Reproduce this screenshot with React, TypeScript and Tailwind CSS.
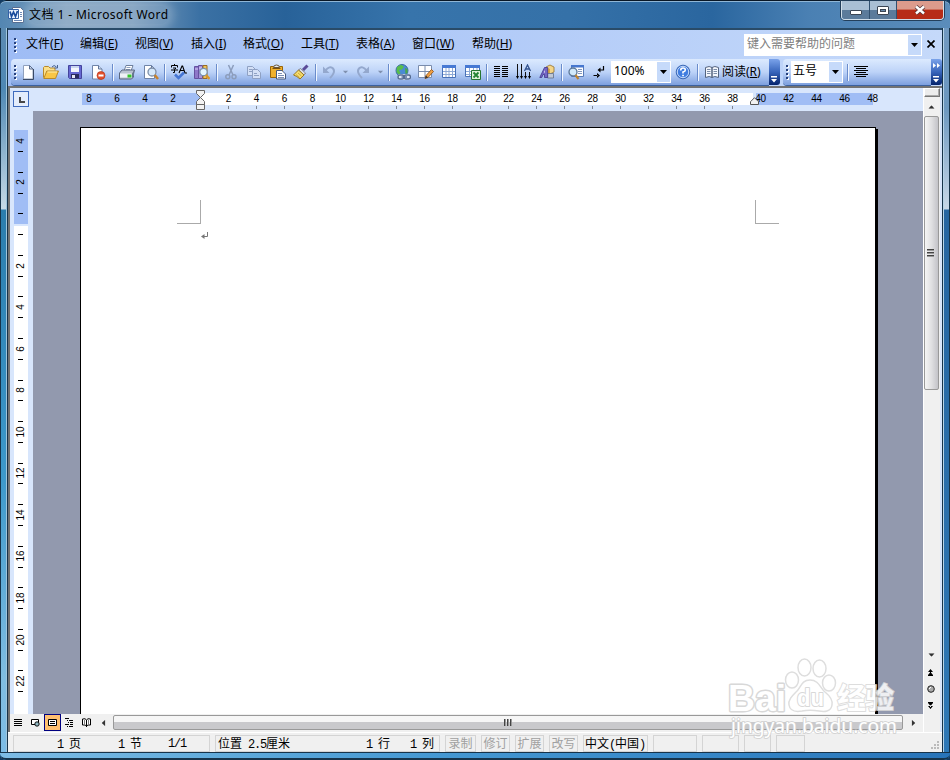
import React from 'react';

const menus = [
    { label: "文件", hotkey: "F", width: "w-[54px]" },
    { label: "编辑", hotkey: "E", width: "w-[55px]" },
    { label: "视图", hotkey: "V", width: "w-[56px]" },
    { label: "插入", hotkey: "I", width: "w-[52px]" },
    { label: "格式", hotkey: "O", width: "w-[58px]" },
    { label: "工具", hotkey: "T", width: "w-[55px]" },
    { label: "表格", hotkey: "A", width: "w-[56px]" },
    { label: "窗口", hotkey: "W", width: "w-[60px]" },
    { label: "帮助", hotkey: "H", width: "w-[54px]" },
];

const icons: Record<string, React.ReactNode> = {
    new: (
        <>
            <path d="M3.500 1.500h6l3.500 3.500v10H3.500z" fill="#fff" stroke="#8fa0bd" />
            <path d="M13.500 5v10.500H3" fill="none" stroke="#3a4a66" />
            <path d="M9.500 1.500V5H13z" fill="#cfdcf2" stroke="#5b6d8d" />
        </>
    ),
    open: (
        <>
            <path d="M.5 13.500v-10l1-1h4l1.500 1.500h5v2.500" fill="#fbe08a" stroke="#b8892a" />
            <path d="M.8 14.500l3-7.500h11.700l-3 7.500z" fill="#f9c646" stroke="#b8892a" />
            <path d="M4.500 8h9.500" stroke="#fff0b0" />
            <path d="M9 3q2-3 4.500 0M14.500 1v3h-3" fill="none" stroke="#4a6390" />
        </>
    ),
    save: (
        <>
            <path d="M1.500 1.500h13v13h-12l-1-1z" fill="#6668d2" stroke="#44449c" />
            <path d="M4 2h8v6H4z" fill="#f2f5fd" />
            <path d="M4 2h8v2H4z" fill="#c9d5f0" />
            <path d="M4 10h8v4.500H4z" fill="#292b5e" />
            <path d="M5 11h3v3H5z" fill="#e5e7f5" />
        </>
    ),
    permission: (
        <>
            <path d="M2.500 1.500h6l3.500 3.500v10H2.500z" fill="#fff" stroke="#6f84a8" />
            <path d="M8.500 1.500V5H12" fill="#cfdcf2" stroke="#5f7498" />
            <circle cx="11" cy="11.500" r="4" fill="#e2512e" stroke="#b52e12" strokeWidth=".6" />
            <path d="M8.500 10.500h5v2h-5z" fill="#fff" />
        </>
    ),
    print: (
        <>
            <path d="M5 7l2-5.500h7L12 7z" fill="#fff" stroke="#6d7f9d" />
            <path d="M7.500 3.500h4M7 5.500h4" stroke="#8ea0bd" />
            <path d="M.5 9l2.500-3h12.500l-1 4v3l-2 2H.5z" fill="#b9c2d0" stroke="#5a6780" />
            <path d="M1 9.500h12v4H1z" fill="#eef1f6" />
            <path d="M8.500 10.500h4v3h-4z" fill="#35c62b" />
            <path d="M13 9.500l2-3v5l-2 3z" fill="#66758f" />
        </>
    ),
    preview: (
        <>
            <path d="M1.500 1.500h7l3 3v10h-10z" fill="#fff" stroke="#6f84a8" />
            <path d="M8.500 1.500v3h3" fill="none" stroke="#5f7498" />
            <circle cx="9" cy="8" r="4" fill="#d6e9fb" stroke="#7b8da8" strokeWidth="1.300" />
            <path d="M11.700 11l3.300 4" stroke="#c8822c" strokeWidth="2.500" />
        </>
    ),
    spelling: (
        <>
            <path d="M3.500 0v1.500M.5 3.500v-2h6v2M2 4h3L3.500 5.500V8.500H2M0 6h7" fill="none" stroke="#000" />
            <path d="M8 9l3-7h.6L14 9M9 6.500h4M13.500 9H16" fill="none" stroke="#000" strokeWidth="1.100" />
            <path d="M4 10.500l3.500 3.500L13 8.500" fill="none" stroke="#4676d4" strokeWidth="2.600" />
        </>
    ),
    research: (
        <>
            <path d="M.5 2.500h4v12h-4z" fill="#8e78c9" stroke="#6652a0" />
            <path d="M4.500 1.500h4v13h-4z" fill="#a894dc" stroke="#6652a0" />
            <path d="M9 1.500h4v13H9z" fill="#eec35c" stroke="#9b6c22" />
            <path d="M1 5h3M5 4h3" stroke="#ddd2fa" />
            <circle cx="9.500" cy="8" r="3.700" fill="#e2f4fe" stroke="#7590af" strokeWidth="1.200" />
            <path d="M12 11l3.500 4" stroke="#d9982b" strokeWidth="2.400" />
        </>
    ),
    cut: (
        <g fill="none" stroke="#8c9dbc" strokeWidth="1.500">
            <path d="M5.500 1l4.500 10M10.500 1L6 11" />
            <circle cx="4.800" cy="12.800" r="2" />
            <circle cx="11" cy="12.800" r="2" />
        </g>
    ),
    copy: (
        <g fill="#d4e0f6" stroke="#8fa1c3">
            <path d="M1.500 2.500h5l3 3v6h-8z" />
            <path d="M3 5.500h3M3 7.500h4" />
            <path d="M6.500 5.500h5l3 3v6h-8z" />
            <path d="M8 9.500h3M8 11.500h5" />
        </g>
    ),
    paste: (
        <>
            <path d="M.5 2.500h12v11H.5z" fill="#efb02d" stroke="#97650b" />
            <path d="M3.500 3.500q0-2.500 3-2.500t3 2.500z" fill="#e8ebf2" stroke="#68563a" />
            <path d="M2.500 4.500h8" stroke="#7b5009" />
            <path d="M6.500 6.500h5.500l3.500 3.500v5h-9z" fill="#fff" stroke="#465a80" />
            <path d="M8 9.500h4M8 11.500h6M8 13.500h6" stroke="#7d90b4" />
        </>
    ),
    brush: (
        <>
            <path d="M10 6l4.500-4.500" stroke="#5a4b98" strokeWidth="3" />
            <path d="M7.500 4.500l5 4.500-1.500 2-5.500-5z" fill="#dadde6" stroke="#62606c" strokeWidth=".7" />
            <path d="M5.500 6l5.500 5-4 4Q4 12 .5 11z" fill="#f5dc6c" stroke="#9a781e" />
            <path d="M3 10.500l3.500 3M5 9l3.500 3" stroke="#c19a32" strokeWidth=".8" />
        </>
    ),
    undo: (
        <>
            <path d="M4 7q5-6 8-2.500T9 14" fill="none" stroke="#94a8cd" strokeWidth="2" />
            <path d="M2 2.500v6.500h6.500z" fill="#94a8cd" />
        </>
    ),
    redo: (
        <>
            <path d="M12 7q-5-6-8-2.500T7 14" fill="none" stroke="#94a8cd" strokeWidth="2" />
            <path d="M14 2.500v6.500H7.500z" fill="#94a8cd" />
        </>
    ),
    link: (
        <>
            <circle cx="7" cy="6.500" r="6" fill="#4a8ad4" stroke="#3b6a9c" />
            <path d="M2 3l4-2.300 3 1.800-2 3-3 .5 1.500 3L4 11 1.500 8z" fill="#58bd4c" />
            <path d="M10 4l2.500 1v4l-2 1z" fill="#49a94a" />
            <rect x="2.500" y="10" width="13.500" height="6" rx="3" fill="#dfe8f8" />
            <g fill="none" stroke="#546b92" strokeWidth="1.400">
                <rect x="3" y="11" width="6" height="4" rx="2" />
                <rect x="9" y="11" width="6.500" height="4" rx="2" />
                <path d="M6.500 13H12" />
            </g>
        </>
    ),
    borders: (
        <>
            <path d="M.5 1.500h13v12H.5z" fill="#fff" stroke="#7a8cac" />
            <path d="M7 2v11M1 7.500h12" stroke="#7a8cac" />
            <path d="M7 14.500l1-3 5.500-6 2 2-5.500 6z" fill="#f0a044" stroke="#884b15" strokeWidth=".8" />
            <path d="M7 14.500l1-3 2 2z" fill="#333" />
        </>
    ),
    table: (
        <>
            <path d="M1.500 1.500h13v12h-13z" fill="#fff" stroke="#4770b7" />
            <path d="M1 1h14v3H1z" fill="#4679d4" />
            <path d="M2 7.500h12M2 10.500h12M5 4v9M8 4v9M11.500 4v9" stroke="#8ea9d6" />
        </>
    ),
    excel: (
        <>
            <path d="M.5 1.500h14v11H.5z" fill="#fff" stroke="#4770b7" />
            <path d="M0 1h15v3H0z" fill="#4679d4" />
            <path d="M1 7.500h13M1 10.500h8M4.500 4v8M8.500 4v8M12 4v3" stroke="#8ea9d6" />
            <path d="M6.500 6.500h9v9h-9z" fill="#dff1da" stroke="#267531" />
            <path d="M8.500 8.500l5 5M13.500 8.500l-5 5" stroke="#238333" strokeWidth="1.800" />
        </>
    ),
    columns: <path d="M1 2.500h6M1 4.500h6M1 6.500h6M1 8.500h6M1 10.500h6M1 12.500h6M9 2.500h6M9 4.500h6M9 6.500h6M9 8.500h6M9 10.500h6M9 12.500h6" stroke="#000" />,
    direction: (
        <>
            <path d="M1.500 0v13M5.500 0v13M9.500 8v5M13.500 8v5" stroke="#111" />
            <path d="M0 12h3l-1.500 3zM4 12h3l-1.500 3zM8 12h3l-1.500 3zM12 12h3l-1.500 3z" />
            <path d="M8.500 7l3-6 3 6M9.500 5h4" fill="none" stroke="#34548f" strokeWidth="1.300" />
        </>
    ),
    drawing: (
        <>
            <path d="M7 3l4-2 4 2v5l-4 2-4-2z" fill="#f4d588" stroke="#93712d" strokeWidth=".8" />
            <path d="M7 3l4 2v5l-4-2z" fill="#d6a741" />
            <path d="M8.500 9.500h6v4.500h-6z" fill="#c1c9d6" stroke="#637089" strokeWidth=".8" />
            <path d="M.8 13.500L5.500 3.500h3.200v10H5.500v-3H4l-1.200 3z" fill="#7466c4" stroke="#40358c" strokeWidth=".8" />
            <path d="M5 8.500h1V6z" fill="#fff" />
        </>
    ),
    docmap: (
        <>
            <path d="M3.500 1.500h12v11h-12z" fill="#fff" stroke="#587bb7" />
            <path d="M3 1h13v2.500H3z" fill="#4677cf" />
            <path d="M10 5.500h4M10 7.500h4M10 9.500h4" stroke="#8298bf" />
            <circle cx="5" cy="8" r="4" fill="#d2eafb" stroke="#5b7798" strokeWidth="1.300" />
            <path d="M7.500 11l3 4" stroke="#bf8430" strokeWidth="2.200" />
        </>
    ),
    marks: (
        <>
            <path d="M12.500 2v4H8" fill="none" stroke="#000" strokeWidth="1.200" />
            <path d="M9.500 3.500v5L6.500 6zM6 9v5l3-2.500zM2.500 10.900h4v1.200h-4z" />
        </>
    ),
    help: (
        <>
            <circle cx="8" cy="8" r="6.800" fill="#3f7ce0" stroke="#3c68b4" />
            <circle cx="8" cy="8" r="5.700" fill="none" stroke="#e6f0ff" strokeWidth=".8" />
            <path d="M5.700 6.500Q5.700 4 8 4t2.300 2Q10.300 7.500 8 8v1.500" fill="none" stroke="#fff" strokeWidth="1.600" />
            <path d="M7.200 10.700h1.700v1.500H7.200z" fill="#fff" />
        </>
    ),
    read: (
        <>
            <path d="M1.500 3.500q4-2 6.500 0v10q-2.500-2-6.500 0zM14.500 3.500Q10.500 1.500 8 3.500v10q2.500-2 6.500 0z" fill="#f4f7fd" stroke="#54647f" />
            <path d="M3 5.500h3.500M3 7.500h3.500M3 9.500h3.500M9.500 5.500H13M9.500 7.500H13M9.500 9.500H13" stroke="#7c8da8" />
        </>
    ),
    align: <path d="M1 2.500h14M3 4.500h10M1 6.500h14M3 8.500h10M1 10.500h14M3 12.500h10" stroke="#000" />,
};

const tools = [
    { icon: "new", width: "w-[22px]" },
    { icon: "open", width: "w-[24px]" },
    { icon: "save", width: "w-[23px]" },
    { icon: "permission", width: "w-[24px]" },
    { icon: "sep", width: "w-[5px]" },
    { icon: "print", width: "w-[24px]" },
    { icon: "preview", width: "w-[23px]" },
    { icon: "sep", width: "w-[5px]" },
    { icon: "spelling", width: "w-[23px]" },
    { icon: "research", width: "w-[24px]" },
    { icon: "sep", width: "w-[5px]" },
    { icon: "cut", width: "w-[23px]" },
    { icon: "copy", width: "w-[24px]" },
    { icon: "paste", width: "w-[23px]" },
    { icon: "brush", width: "w-[24px]" },
    { icon: "sep", width: "w-[5px]" },
    { icon: "undo", width: "w-[21px]" },
    { icon: "arrow", width: "w-[13px]" },
    { icon: "redo", width: "w-[22px]" },
    { icon: "arrow", width: "w-[12px]" },
    { icon: "sep", width: "w-[5px]" },
    { icon: "link", width: "w-[23px]" },
    { icon: "borders", width: "w-[23px]" },
    { icon: "table", width: "w-[24px]" },
    { icon: "excel", width: "w-[23px]" },
    { icon: "sep", width: "w-[5px]" },
    { icon: "columns", width: "w-[23px]" },
    { icon: "direction", width: "w-[23px]" },
    { icon: "drawing", width: "w-[24px]" },
    { icon: "sep", width: "w-[6px]" },
    { icon: "docmap", width: "w-[22px]" },
    { icon: "marks", width: "w-[24px]" },
];

const statusModes = [
    { label: "录制", width: "w-[31px]" },
    { label: "修订", width: "w-[29px]" },
    { label: "扩展", width: "w-[29px]" },
    { label: "改写", width: "w-[29px]" },
];

function Icon({ name }: { name: string }) {
    return <svg viewBox="0 0 16 16" className="h-4 w-4 shrink-0">{icons[name]}</svg>;
}

function Down({ className = "fill-black" }: { className?: string }) {
    return <svg viewBox="0 0 7 4" className={`h-1 w-[7px] shrink-0 ${className}`}><path d="M0 0h7L3.500 4z" /></svg>;
}

function Separator() {
    return <div className="h-[17px] w-[2px] border-l border-[#6a8ccb] bg-[#f1f7ff]" />;
}

function Grip() {
    return (
        <div className="flex w-[3px] shrink-0 flex-col gap-[2px]">
            {[0, 1, 2, 3].map((i) => (
                <div key={i} className="h-[2px] w-[2px] bg-[#27417c] shadow-[1px_1px_0_#fff]" />
            ))}
        </div>
    );
}

function Cap({ more = false }: { more?: boolean }) {
    return (
        <div className="flex h-[26px] w-[11px] shrink-0 flex-col items-center justify-between rounded-r-[3px] bg-linear-to-b from-[#7ba3ea] via-[#3865bb] to-[#05236d] pt-[4px] pb-[2px]">
            <svg viewBox="0 0 8 5" className="h-[5px] w-2">
                {more && <path d="M0 0l3 2.500L0 5zM4 0l3 2.500L4 5z" fill="#fff" />}
            </svg>
            <svg viewBox="0 0 7 7" className="h-[7px] w-[7px]">
                <path d="M0 0h6v1.500H0zM0 3h6L3 6.500z" fill="#fff" />
            </svg>
        </div>
    );
}

// Halfwidth characters take 6px and fullwidth ones 12px in the status bar
function Fixed({ children }: { children: string }) {
    return (
        <span className="whitespace-pre">
            {children.split(/([\u4e00-\u9fff]+)/).map((part, i) => (
                <span key={i} className={i % 2 ? "font-['Noto_Sans_CJK_SC',sans-serif]" : "font-['Liberation_Mono',monospace] tracking-[-1.2px]"}>{part}</span>
            ))}
        </span>
    );
}

function TitleBar() {
    return (
        <div className="flex h-[28px] shrink-0 items-start justify-between rounded-t-[6px] border-t border-[#091726] bg-[linear-gradient(90deg,#5386b2_0%,#7e9fbe_7%,#7699ba_14%,#3b71a4_21%,#286299_30%,#3774ab_43%,#3571a8_60%,#2a669f_75%,#4a80b3_85%,#5b8dbb_100%)] shadow-[inset_0_1px_0_#8fb6d6]">
            <div className="flex h-[28px] items-center gap-[5px] pl-[8px]">
                <svg viewBox="0 0 16 16" className="h-4 w-4">
                    <path d="M4.500.5h8l3 3v12h-11z" fill="#fff" stroke="#566d91" />
                    <path d="M12 5.500h2M12 7.500h2M12 9.500h2M6 13.500h8" stroke="#6987b5" />
                    <path d="M.5 2.500h10v9H.5z" fill="#e8f1fd" stroke="#3562a5" />
                    <path d="M2 4.500l1.500 5L5.500 5l2 4.500L9.500 4" fill="none" stroke="#194b9c" strokeWidth="1.700" />
                </svg>
                <span className="rounded-full bg-white/15 text-[12px] tracking-[0.42px] whitespace-nowrap text-black shadow-[0_0_8px_5px_rgba(255,255,255,0.2)]">文档 1 - Microsoft Word</span>
            </div>
            <div className="mr-[6px] flex h-[19px] overflow-hidden rounded-b-[4px] border border-t-0 border-[#d0deea] shadow-[0_0_0_1px_#233f5b]">
                <div className="flex w-[28px] items-center justify-center border-r border-[#31506f] bg-linear-to-b from-[#a9bfd4] from-50% to-[#5b7b9b] to-50%">
                    <div className="mt-[5px] h-[5px] w-[12px] rounded-[1px] border border-[#3b4654] bg-white" />
                </div>
                <div className="flex w-[27px] items-center justify-center border-r border-[#31506f] bg-linear-to-b from-[#a9bfd4] from-50% to-[#5b7b9b] to-50%">
                    <div className="h-[9px] w-[12px] rounded-[1px] border border-[#3b4654] bg-white p-[2px]">
                        <div className="h-[3px] border border-[#3b4654] bg-[#688aac]" />
                    </div>
                </div>
                <div className="flex w-[46px] items-center justify-center bg-linear-to-b from-[#dc9b8c] from-45% to-[#b72c17] to-50%">
                    <svg viewBox="0 0 12 10" className="h-[10px] w-3">
                        <path d="M2 1.500l8 7M10 1.500l-8 7" stroke="#54363a" strokeWidth="4" />
                        <path d="M2 1.500l8 7M10 1.500l-8 7" stroke="#fff" strokeWidth="2.400" />
                    </svg>
                </div>
            </div>
        </div>
    );
}

function MenuBar() {
    return (
        <div className="flex h-[29px] shrink-0 items-center pl-[6px] text-[12px]">
            <Grip />
            <div className="ml-[9px] flex flex-1 pb-px">
                {menus.map((menu) => (
                    <div key={menu.hotkey} className={`${menu.width} whitespace-nowrap`}>{menu.label}(<u>{menu.hotkey}</u>)</div>
                ))}
            </div>
            <div className="mr-[5px] flex h-[22px] w-[178px] items-center border border-white bg-white">
                <span className="flex-1 pb-[2px] pl-[2px] text-[#808080]">键入需要帮助的问题</span>
                <div className="flex h-full w-[13px] items-center justify-center bg-[#c6dafa]"><Down /></div>
            </div>
            <svg viewBox="0 0 8 8" className="mr-[7px] mb-[2px] h-2 w-2"><path d="M.5.5l7 7M7.500.5l-7 7" stroke="#000" strokeWidth="1.700" /></svg>
        </div>
    );
}

function Toolbar() {
    return (
        <div className="flex h-[27px] shrink-0 items-start pl-[3px] text-[12px]">
            <div className="flex h-[26px] items-center rounded-l-[4px] bg-linear-to-b from-[#dceafe] via-[#bdd3f8] to-[#7d9fde] shadow-[0_1px_0_#3b619f]">
                <div className="w-[6px] pl-[3px]"><Grip /></div>
                {tools.map((tool, index) => (
                    <div key={index} className={`flex items-center justify-center ${tool.width}`}>
                        {tool.icon === "sep" && <Separator />}
                        {tool.icon === "arrow" && <Down className="fill-[#7f90af] scale-80" />}
                        {icons[tool.icon] && <Icon name={tool.icon} />}
                    </div>
                ))}
                <div className="flex h-[22px] w-[60px] items-center border border-white bg-white">
                    <span className="flex-1 pb-[2px] pl-[2px] font-['Noto_Sans',sans-serif]">100%</span>
                    <div className="flex h-full w-[13px] items-center justify-center bg-[#c6dafa]"><Down /></div>
                </div>
                <div className="flex w-[24px] justify-center"><Icon name="help" /></div>
                <div className="flex w-[5px] justify-center"><Separator /></div>
                <div className="flex w-[69px] items-center gap-[2px] pl-[4px] whitespace-nowrap"><Icon name="read" /><span>阅读(<u>R</u>)</span></div>
            </div>
            <Cap />
            <div className="ml-[3px] flex h-[26px] flex-1 items-center rounded-l-[4px] bg-linear-to-b from-[#dceafe] via-[#bdd3f8] to-[#7d9fde] shadow-[0_1px_0_#3b619f]">
                <div className="w-[8px] pl-[3px]"><Grip /></div>
                <div className="flex h-[22px] w-[52px] items-center border border-white bg-white">
                    <span className="flex-1 pb-[2px] pl-px">五号</span>
                    <div className="flex h-full w-[13px] items-center justify-center bg-[#c6dafa]"><Down /></div>
                </div>
                <div className="mr-[4px] ml-[4px]"><Separator /></div>
                <Icon name="align" />
            </div>
            <Cap more />
        </div>
    );
}

function HorizontalRuler() {
    const left = [8, 6, 4, 2];
    const right = Array.from({ length: 24 }, (_, i) => (i + 1) * 2);
    return (
        <div className="flex h-[23px] shrink-0 bg-[#d8e6fc]">
            <div className="mt-[3px] ml-[3px] flex h-[16px] w-[16px] items-center justify-center border border-[#3f6bbd] bg-[#e4edfc]">
                <div className="mt-[2px] ml-px h-[6px] w-[6px] border-b-2 border-l-2 border-[#474747]" />
            </div>
            <div className="relative mt-[5px] ml-[53px] flex h-[12px] w-[791px] font-['Liberation_Sans',sans-serif] text-[10px] leading-[12px] tracking-[-0.2px] text-black">
                <div className="w-[119px] bg-[#a0bdf5]" />
                <div className="w-[552px] bg-white" />
                <div className="ml-[3px] w-[117px] bg-[#a0bdf5]" />
                {left.map((n) => (
                    <span key={n} className="absolute top-0 w-5 text-center" style={{ left: 109 - n * 14 }}>{n}</span>
                ))}
                {right.map((n) => (
                    <span key={n} className="absolute top-0 w-5 text-center" style={{ left: 108.5 + n * 14 }}>{n}</span>
                ))}
                {right.filter((n) => n < 40).map((n) => (
                    <div key={n} className="absolute top-[13px] h-[3px] w-px bg-[#7f8794]" style={{ left: 118 + n * 14 }} />
                ))}
                {/* indent markers */}
                <svg viewBox="0 0 9 20" className="absolute -top-[3px] left-[114px] h-5 w-[9px]">
                    <path d="M.5.5h8v3l-4 4-4-4zM4.500 7.500l4 4v3h-8v-3zM.5 14.500h8v5h-8z" fill="#f2f2f2" stroke="#666" />
                </svg>
                <svg viewBox="0 0 9 8" className="absolute top-[4px] left-[668px] h-2 w-[9px]">
                    <path d="M4.500.7l4 4v2.800h-8V4.700z" fill="#f2f2f2" stroke="#555" />
                </svg>
            </div>
        </div>
    );
}

function VerticalRuler() {
    const numbers = [-4, -2, ...Array.from({ length: 11 }, (_, i) => (i + 1) * 2)];
    const ticks = Array.from({ length: 27 }, (_, i) => i - 3.5);
    return (
        <div className="w-[23px] shrink-0 bg-[#d8e6fc] pl-[4px]">
            <div className="relative h-full w-[14px] overflow-hidden pt-[19px] font-['Liberation_Sans',sans-serif] text-[10px] leading-[12px] tracking-[-0.2px] text-black">
                <div className="h-[94px] bg-[#a0bdf5]" />
                <div className="mt-[2px] h-[500px] bg-white" />
                {numbers.map((n) => (
                    <span key={n} className="absolute left-0 h-3 w-[13px] -rotate-90 text-center" style={{ top: Math.round(107 + n * 20.78) }}>{Math.abs(n)}</span>
                ))}
                {ticks.map((n) => (
                    <div key={n} className="absolute left-[4px] h-px w-[5px] bg-black" style={{ top: Math.round(112.7 + n * 20.78) }} />
                ))}
            </div>
        </div>
    );
}

function VerticalScroll() {
    return (
        <div className="flex w-[17px] shrink-0 flex-col items-start border-l border-white bg-[#f0f0f0]">
            <div className="h-[9px] w-[16px] border border-t-white border-r-[#777] border-b-[#777] border-l-white bg-[#ececec] shadow-[inset_-1px_-1px_0_#aaa]" />
            <div className="flex h-[19px] w-[15px] items-center justify-center"><Down className="rotate-180 fill-[#333] scale-90" /></div>
            <div className="flex h-[274px] w-[15px] flex-col items-center justify-center gap-px rounded-[2px] border border-[#999] bg-linear-to-r from-[#f5f5f5] via-[#e0e0e2] to-[#c3c3c8] pr-[2px]">
                {[0, 1, 2].map((i) => <div key={i} className="h-[2px] w-[7px] border-b border-[#999] bg-[#444]" />)}
            </div>
            <div className="flex-1" />
            <div className="flex h-[20px] w-[15px] items-center justify-center"><Down className="fill-[#333] scale-90" /></div>
            <div className="flex h-[67px] w-[13px] flex-col items-center gap-[9px] pt-[4px]">
                <svg viewBox="0 0 7 7" className="h-[7px] w-[7px]"><path d="M3.500 0L6 3H1zM3.500 3L6 6H1zM3 2h1v2H3zM1 6h5v1H1z" /></svg>
                <svg viewBox="0 0 8 8" className="h-2 w-2"><circle cx="4" cy="4" r="3.300" fill="#aaa" stroke="#222" /><path d="M2 4l2-2" stroke="#fff" /></svg>
                <svg viewBox="0 0 7 7" className="h-[7px] w-[7px]"><path d="M3.500 7L6 4H1zM3.500 4L6 1H1zM3 3h1v2H3zM1 0h5v1H1z" /></svg>
            </div>
        </div>
    );
}

function Page() {
    return (
        <div className="relative min-w-0 flex-1 overflow-hidden bg-[#9299ae] pt-[16px] pl-[47px]">
            <div className="h-[590px] w-[796px] border border-black bg-white shadow-[2px_2px_0_#000]">
                <div className="flex justify-between pt-[72px] pr-[96px] pl-[96px]">
                    <div className="h-[24px] w-[24px] border-r border-b border-[#aaa]" />
                    <div className="h-[24px] w-[24px] border-b border-l border-[#aaa]" />
                </div>
                <svg viewBox="0 0 8 8" className="mt-[8px] ml-[120px] h-2 w-2">
                    <path d="M6.500 0v4.500H2" fill="none" stroke="#777" />
                    <path d="M0 4.500L3.500 2v5z" fill="#777" />
                </svg>
            </div>
        </div>
    );
}

function ViewBar() {
    return (
        <div className="flex h-[18px] shrink-0 bg-[#f0f0f0] pb-px">
            <div className="flex w-[84px] items-center">
                <div className="flex w-[17px] justify-center"><svg viewBox="0 0 9 9" className="h-[9px] w-[9px]"><path d="M0 1.500h8M0 3.500h8M0 5.500h8M0 7.500h8" stroke="#000" /></svg></div>
                <div className="flex w-[17px] justify-center"><svg viewBox="0 0 9 9" className="h-[9px] w-[9px]"><path d="M.5 1.500h7v5h-7z" fill="#fff" stroke="#000" /><circle cx="6" cy="6" r="2.200" fill="#8fb5c0" stroke="#000" strokeWidth=".9" /></svg></div>
                <div className="flex h-[17px] w-[17px] items-center justify-center border border-[#000080] bg-[#ffc071]"><svg viewBox="0 0 9 9" className="h-[9px] w-[9px]"><path d="M.5 1.500h8v6h-8z" fill="#fff" stroke="#000" /><path d="M2 3.500h5M2 5.500h5" stroke="#000" /></svg></div>
                <div className="flex w-[17px] justify-center"><svg viewBox="0 0 9 9" className="h-[9px] w-[9px]"><path d="M0 .5h4M2 2.500h1M4 2.500h4M3 4.500h1M5 4.500h3M5 6.500h3M2 8.500h1M4 8.500h4M0 6.500h4" stroke="#000" /></svg></div>
                <div className="flex w-[16px] justify-center"><svg viewBox="0 0 9 9" className="h-[9px] w-[9px]"><path d="M.5 1q3-1 4 1 1-2 4-1v6q-3-.5-4 1-1-1.500-4-1zM4.500 2v7" fill="#fff" stroke="#000" /><path d="M2 3h1M2 5h1M6 3h1M6 5h1" stroke="#000" /></svg></div>
            </div>
            <div className="flex w-[19px] items-center justify-center"><Down className="rotate-90 fill-[#333] scale-90" /></div>
            <div className="flex h-[15px] w-[791px] items-center justify-center gap-px self-center rounded-[2px] border border-[#999] bg-linear-to-b from-[#f6f6f6] from-45% to-[#c9c9cc] to-50%">
                {[0, 1, 2].map((i) => <div key={i} className="h-[7px] w-[2px] border-r border-[#999] bg-[#444]" />)}
            </div>
            <div className="flex w-[20px] items-center justify-center"><Down className="-rotate-90 fill-[#333] scale-90" /></div>
        </div>
    );
}

function StatusBar() {
    return (
        <div className="flex h-[20px] shrink-0 gap-[5px] border-t border-white bg-[#f0f0f0] pt-[2px] pl-[5px] text-[12px] leading-[13px] *:h-[17px] *:shrink-0 *:border *:border-[#d4d4d4]">
            <div className="flex w-[197px] pl-[43px]">
                <div className="w-[61px]"><Fixed>1 页</Fixed></div>
                <div className="w-[50px]"><Fixed>1 节</Fixed></div>
                <Fixed>1/1</Fixed>
            </div>
            <div className="flex w-[225px] pl-[2px]">
                <div className="w-[148px]"><Fixed>位置 2.5厘米</Fixed></div>
                <div className="w-[44px]"><Fixed>1 行</Fixed></div>
                <Fixed>1 列</Fixed>
            </div>
            {statusModes.map((mode) => (
                <div key={mode.label} className={`${mode.width} text-center text-[#a0a0a0]`}><Fixed>{mode.label}</Fixed></div>
            ))}
            <div className="w-[65px] pl-px"><Fixed>中文(中国)</Fixed></div>
            <div className="w-[44px]" />
            <div className="w-[37px]" />
            <div className="w-[27px]" />
            <div className="w-[29px]" />
            <div className="ml-auto flex items-end justify-end border-none! pr-[2px] pb-[2px]">
                <svg viewBox="0 0 9 9" className="h-[9px] w-[9px]"><path d="M6 0h2v2H6zM3 3h2v2H3zM6 3h2v2H6zM0 6h2v2H0zM3 6h2v2H3zM6 6h2v2H6z" fill="#bbb" /></svg>
            </div>
        </div>
    );
}

function Watermark() {
    return (
        <svg viewBox="0 0 180 90" className="absolute top-[655px] left-[722px] h-[90px] w-[180px]">
            <g fill="#fff" fillOpacity=".7" stroke="#dedede" strokeWidth="1.500">
                <ellipse cx="70" cy="25" rx="6.500" ry="8" />
                <ellipse cx="82.500" cy="12.500" rx="6.500" ry="8.500" />
                <ellipse cx="97.500" cy="13.500" rx="6.500" ry="8.500" />
                <ellipse cx="107" cy="28" rx="6.500" ry="8" />
                <path d="M88 25c9 0 10 8 15 12s8 8 7 13c-1 7-8 7-13 6-6-1-12-1-17 0-6 1-12 0-13-6-1-5 3-9 7-13 5-4 5-12 14-12z" />
            </g>
            <g stroke="#d8d8d8" strokeWidth="3" strokeLinejoin="round" paintOrder="stroke" fill="#fff" fontWeight="700">
                <text x="6" y="56" fontSize="37" textLength="58" lengthAdjust="spacingAndGlyphs" fontFamily="Liberation Sans, sans-serif">Bai</text>
                <text x="75" y="51" fontSize="23" textLength="27" strokeWidth="2" lengthAdjust="spacingAndGlyphs" fontFamily="Liberation Sans, sans-serif">du</text>
                <text x="115" y="54" fontSize="29" textLength="57" strokeWidth="2" fontFamily="Noto Sans CJK SC, sans-serif" opacity=".85">经验</text>
            </g>
            <text x="9" y="78" fontSize="19" textLength="166" lengthAdjust="spacingAndGlyphs" fill="#fff" stroke="#cfcfcf" strokeWidth="1.600" paintOrder="stroke" fontFamily="Noto Sans, sans-serif">jingyan.baidu.com</text>
        </svg>
    );
}

export default function App() {
    return (
        <div className="bg-[#143a60]">
            <div className="relative flex h-[760px] w-[950px] flex-col overflow-hidden rounded-[6px] bg-[#2f7fb8] font-['Noto_Sans','Noto_Sans_CJK_SC',sans-serif] text-black">
                <TitleBar />
                <div className="flex h-[724px] shrink-0">
                    <div className="w-[8px] shrink-0 border-r border-l border-[#16334a] bg-[linear-gradient(180deg,#5b8bb2_0,#4e88b4_60px,#c6dae6_181px,#2b7dae_182px,#3d99cb_450px,#80bde1_650px,#7cbce6_724px)] shadow-[inset_-1px_0_0_#9fc5dd]" />
                    <div className="flex w-[934px] flex-col border-t-2 border-[#294b68] bg-linear-to-r from-[#9ebcf5] to-[#c5d9fa]">
                        <MenuBar />
                        <Toolbar />
                        <div className="flex h-[646px] shrink-0 flex-col border-t-2 border-l-2 border-[#727272] bg-[#d8e6fc]">
                            <div className="flex h-[626px] shrink-0">
                                <div className="flex min-w-0 flex-1 flex-col">
                                    <HorizontalRuler />
                                    <div className="flex min-h-0 flex-1">
                                        <VerticalRuler />
                                        <Page />
                                    </div>
                                </div>
                                <div className="-mb-[18px] flex pr-[2px]"><VerticalScroll /></div>
                            </div>
                            <div className="w-[913px]"><ViewBar /></div>
                        </div>
                        <StatusBar />
                    </div>
                    <div className="w-[8px] shrink-0 border-r border-l border-[#16334a] bg-[linear-gradient(180deg,#7199c0_0,#6c98c0_80px,#c7d7e8_181px,#2565a1_182px,#2e78b6_724px)] shadow-[inset_1px_0_0_#b8d4e8]" />
                </div>
                <div className="h-[8px] shrink-0 rounded-b-[6px] border-t border-b-2 border-[#16334a] bg-[linear-gradient(90deg,#7dbce5_0%,#65aedd_20%,#4699d3_45%,#398ac9_70%,#2874b9_100%)]" />
                <Watermark />
            </div>
        </div>
    );
}
